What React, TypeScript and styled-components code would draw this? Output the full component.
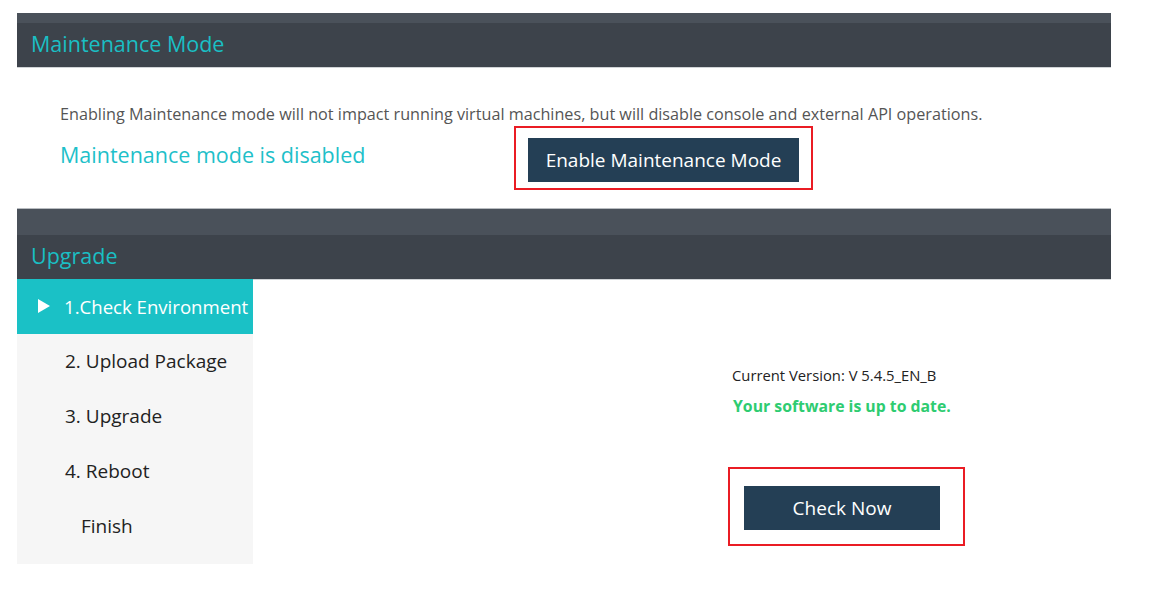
import React from "react";
import styled, { createGlobalStyle } from "styled-components";

const GlobalStyle = createGlobalStyle`
  html, body {
    margin: 0;
    padding: 0;
    background: #fff;
    font-family: "Open Sans", "Noto Sans", sans-serif;
  }
`;

const Page = styled.div`
  width: 1094px;
  padding: 13px 0 0 17px;
`;

const Header = styled.div<{ $strip: number }>`
  background: #3d434b;
  border-top: ${p => p.$strip}px solid #4a515a;
  border-bottom: 1px solid #d0d3d6;
  display: flex;
  align-items: center;
  padding: 0 0 3px 14px;
  box-sizing: border-box;
  height: ${p => p.$strip + 45}px;
`;

const HeaderTitle = styled.h2`
  margin: 0;
  font-size: 21.5px;
  font-weight: 400;
  color: #1abfc4;
`;

const MaintBody = styled.div`
  padding: 35px 0 18px 43px;
`;

const Description = styled.p`
  margin: 0;
  font-size: 16.2px;
  line-height: 22px;
  color: #555;
`;

const StatusRow = styled.div`
  display: flex;
  align-items: flex-start;
  margin-top: 1px;
`;

const Status = styled.div`
  width: 454px;
  margin-top: 15px;
  font-size: 21.5px;
  color: #1ec0c9;
  line-height: 28px;
`;

const Highlight = styled.div<{ $pad: string }>`
  border: 2px solid #ea1c24;
  padding: ${p => p.$pad};
`;

const DarkButton = styled.button<{ $w: number }>`
  width: ${p => p.$w}px;
  height: 44px;
  border: none;
  background: #243f55;
  color: #fff;
  font-family: inherit;
  font-size: 19px;
  cursor: pointer;
`;

const UpgradeHeader = styled.div`
  border-top: 1px solid #b8bcc0;
`;

const UpgradeBody = styled.div`
  display: flex;
`;

const Steps = styled.ul`
  list-style: none;
  margin: -1px 0 0;
  padding: 0 0 10px;
  width: 236px;
  background: #f6f6f6;
`;

const Step = styled.li<{ $active?: boolean; $indent?: number }>`
  height: 55px;
  display: flex;
  align-items: center;
  padding: 0 0 1px ${p => p.$indent ?? 48}px;
  box-sizing: border-box;
  font-size: ${p => (p.$active ? 18.6 : 19)}px;
  color: ${p => (p.$active ? "#fff" : "#222")};
  background: ${p => (p.$active ? "#1ac1c6" : "transparent")};
  white-space: nowrap;
  overflow: hidden;
`;

const Arrow = styled.span`
  width: 0;
  height: 0;
  border-top: 7px solid transparent;
  border-bottom: 7px solid transparent;
  border-left: 12px solid #fff;
  margin: 0 14px 0 21px;
`;

const Content = styled.div`
  flex: 1;
  padding: 85px 0 0 479px;
`;

const Version = styled.div`
  font-size: 14.8px;
  color: #222;
  line-height: 20px;
`;

const UpToDate = styled.div`
  font-size: 15.8px;
  font-weight: 700;
  color: #2ecc71;
  line-height: 20px;
  margin: 11px 0 51px 1px;
`;

const CheckBox = styled(Highlight)`
  display: inline-block;
  margin-left: -4px;
`;

const steps = ["2. Upload Package", "3. Upgrade", "4. Reboot"];

export default function App() {
  return (
    <>
      <GlobalStyle />
      <Page>
        <Header $strip={10}>
          <HeaderTitle>Maintenance Mode</HeaderTitle>
        </Header>
        <MaintBody>
          <Description>
            Enabling Maintenance mode will not impact running virtual machines, but will disable console and external API operations.
          </Description>
          <StatusRow>
            <Status>Maintenance mode is disabled</Status>
            <Highlight $pad="10px 12px 6px">
              <DarkButton $w={271}>Enable Maintenance Mode</DarkButton>
            </Highlight>
          </StatusRow>
        </MaintBody>
        <UpgradeHeader>
          <Header $strip={26}>
            <HeaderTitle>Upgrade</HeaderTitle>
          </Header>
        </UpgradeHeader>
        <UpgradeBody>
          <Steps>
            <Step $active $indent={0}>
              <Arrow />
              1.Check Environment
            </Step>
            {steps.map(s => (
              <Step key={s}>{s}</Step>
            ))}
            <Step $indent={64}>Finish</Step>
          </Steps>
          <Content>
            <Version>Current Version: V 5.4.5_EN_B</Version>
            <UpToDate>Your software is up to date.</UpToDate>
            <CheckBox $pad="17px 23px 14px 14px">
              <DarkButton $w={196}>Check Now</DarkButton>
            </CheckBox>
          </Content>
        </UpgradeBody>
      </Page>
    </>
  );
}
